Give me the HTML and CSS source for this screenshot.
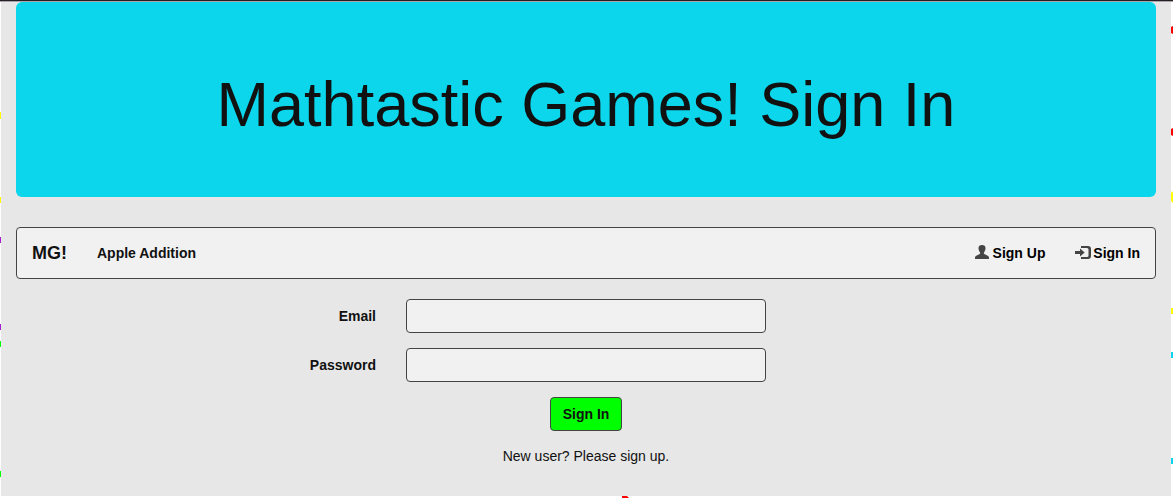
FILE: index.html
```html
<!DOCTYPE html>
<html lang="en">
<head>
<meta charset="utf-8">
<title>Mathtastic Games! Sign In</title>
<link rel="stylesheet" href="styles.css">
</head>
<body>
<svg class="confetti" width="1173" height="498" aria-hidden="true">
  <path fill="#ffff00" d="M0 112h1v7H0zM0 197h1v6H0zM1171 193l2-2v12l-2-2zM1171 308h2v6h-2z"/>
  <path fill="#a51fce" d="M0 237h1v6H0zM0 324h1v6H0z"/>
  <path fill="#00ff00" d="M0 341h1v6H0zM0 471h1v6H0z"/>
  <path fill="#ff0000" d="M1171 27l2-1v8l-2-1zM1171 129l2-1v8l-2-1zM622 496h5l2 2h-7z"/>
  <path fill="#0cd6eb" d="M1171 352h2v6h-2zM1171 458h2v6h-2z"/>
</svg>
<div class="topline"></div>
<main class="container">
  <header class="jumbotron"><h1>Mathtastic Games! Sign In</h1></header>
  <nav class="navbar">
    <a class="brand" href="#">MG!</a>
    <a class="link" href="#">Apple Addition</a>
    <div class="right">
      <a class="link" href="#"><svg class="icon user" width="14" height="14" viewBox="0 0 14 14"><path d="M7 0C4.800 0 3.500 1.200 3.500 3.100c0 1.600.5 3.100 1.500 4.300.3.600.2 1.200-.3 1.500L1.300 10.700C.4 11.200 0 11.800 0 12.700V14h14v-1.300c0-.9-.4-1.500-1.300-2L9.300 8.900C8.800 8.600 8.700 8 9 7.400c1-1.200 1.500-2.700 1.500-4.300C10.500 1.200 9.200 0 7 0z"/></svg> Sign Up</a>
      <a class="link" href="#"><svg class="icon login" width="16" height="13" viewBox="0 0 16 13"><path d="M6 0h7Q16 0 16 3v7q0 3-3 3H6v-2h6q1.500 0 1.500-1.500v-6Q13.500 2 12 2H6zM5 2.500l4.700 4L5 10.500V8H0V5h5z"/></svg> Sign In</a>
    </div>
  </nav>
  <form class="form">
    <label for="email">Email</label><input id="email" type="email">
    <label for="password">Password</label><input id="password" type="password">
    <button type="button">Sign In</button>
    <p>New user? Please sign up.</p>
  </form>
</main>
</body>
</html>
```
FILE: styles.css
```css
* { box-sizing: border-box; }
body {
  margin: 0;
  height: 498px;
  overflow: hidden;
  background: #fff;
  color: #111;
  font: 14px/20px "Liberation Sans", Arial, sans-serif;
}
.confetti { position: absolute; top: 0; left: 0; }
.topline { height: 2px; background: #a9a5a8; border-top: 1px solid #231f24; }
.container {
  width: 1170px;
  height: 494px;
  margin-left: 1px;
  padding: 0 15px;
  background: #e7e7e7;
}
.jumbotron {
  height: 195px;
  padding-top: 68px;
  margin-bottom: 30px;
  border-radius: 6px;
  background: #0cd6eb;
  text-align: center;
}
h1 { margin: 0; font-size: 63px; line-height: 69px; font-weight: 400; }
.navbar {
  display: flex;
  align-items: center;
  height: 52px;
  margin-bottom: 20px;
  padding: 0 15px;
  border: 1px solid #444;
  border-radius: 4px;
  background: #f1f1f1;
}
.navbar a { color: #111; font-weight: 700; text-decoration: none; }
.navbar .brand { font-size: 18px; margin-right: 30px; }
.navbar .right { display: flex; gap: 30px; margin-left: auto; }
.navbar .right .link { color: #000; }
.icon { fill: #444; vertical-align: -1px; }
.login { margin-right: -2px; }
.form {
  display: grid;
  grid-template-columns: 360px 360px;
  grid-auto-rows: 34px;
  column-gap: 30px;
  row-gap: 15px;
}
label { padding-top: 7px; text-align: right; font-weight: 700; }
input {
  width: 360px;
  height: 34px;
  border: 1px solid #444;
  border-radius: 4px;
  background: #f1f1f1;
}
button {
  grid-column: 2;
  justify-self: center;
  width: 72px;
  height: 34px;
  padding: 0;
  border: 1px solid #444;
  border-radius: 4px;
  background: #00ff00;
  color: #111;
  font: 700 14px/20px "Liberation Sans", Arial, sans-serif;
}
.form p { grid-column: 2; margin: 0; text-align: center; }
```
